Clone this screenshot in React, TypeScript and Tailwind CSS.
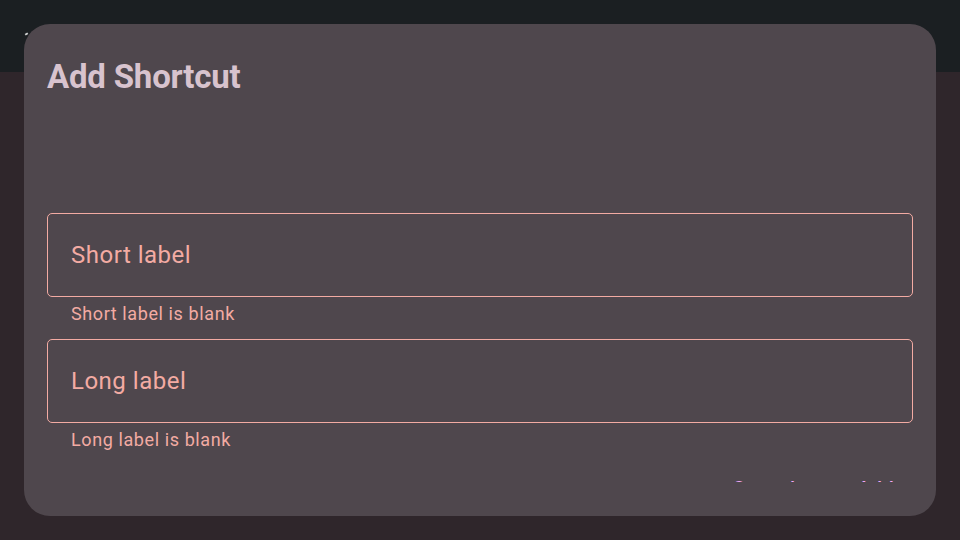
import React from 'react';

const Field = ({ label, error }: { label: string; error: string }) => (
  <div className="flex flex-col">
    <div className="h-[84px] rounded-[5px] border-[1.5px] border-[#f3aba3] flex items-center px-[23px]">
      <span className="text-[24px] leading-[30px] tracking-[0.5px] text-[#f3aba3]">{label}</span>
    </div>
    <div className="mt-[7px] mb-[15px] px-[24px] text-[18px] leading-[20px] tracking-[0.6px] text-[#f3aba3]">
      {error}
    </div>
  </div>
);

export default function App() {
  return (
    <div className="relative w-[960px] h-[540px] overflow-hidden bg-[#2f262b] font-['Roboto',sans-serif]">
      <div className="h-[72px] bg-[#1b1f22]" />
      <span className="absolute left-[25px] top-[33px] w-[3px] h-[2px] bg-white/80 rotate-[-30deg]" />

      {/* dialog */}
      <div className="absolute left-[24px] top-[24px] w-[912px] h-[492px] rounded-[26px] bg-[#4f474d] px-[23px] pt-[33px]">
        <h1 className="text-[33px] leading-[40px] font-bold tracking-[-0.2px] text-[#d8c3ce]">Add Shortcut</h1>
        <div className="mt-[116px] h-[269px] overflow-hidden">
          <Field label="Short label" error="Short label is blank" />
          <Field label="Long label" error="Long label is blank" />
          <div className="mt-[12px] flex justify-end gap-[62px] pr-[19px] text-[20px] leading-[24px] font-medium tracking-[0.3px] text-[#f0a6f5]">
            <span>Cancel</span>
            <span>Add</span>
          </div>
        </div>
      </div>
    </div>
  );
}
